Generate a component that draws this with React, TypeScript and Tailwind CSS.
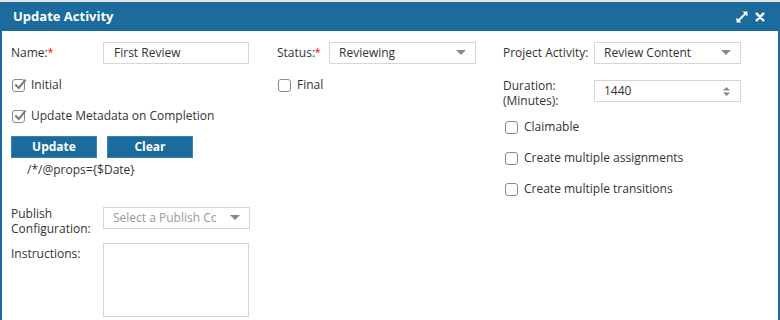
import React from "react";

const font = { fontFamily: '"Open Sans", "Noto Sans", sans-serif' };

function Check({ checked }: { checked?: boolean }) {
  return (
    <span className="relative inline-block w-[13px] h-[13px] rounded-[3px] border border-[#8a8a8a] bg-white shrink-0">
      {checked && (
        <svg viewBox="0 0 14 14" className="absolute left-[0px] top-[-2px] w-[14px] h-[14px]">
          <path d="M3 7.2 L5.8 10 L12 2.5" fill="none" stroke="#7a7a7a" strokeWidth="2" strokeLinecap="square" />
        </svg>
      )}
    </span>
  );
}

function CheckRow({ label, checked }: { label: string; checked?: boolean }) {
  return (
    <div className="flex items-center h-[20px] gap-[6px] pl-[1px]">
      <Check checked={checked} />
      <span>{label}</span>
    </div>
  );
}

function Caret() {
  return (
    <svg viewBox="0 0 10 6" className="w-[10px] h-[6px] shrink-0">
      <path d="M0 0 L10 0 L5 5 Z" fill="#888" />
    </svg>
  );
}

function Select({ value, placeholder }: { value: string; placeholder?: boolean }) {
  return (
    <div className="flex items-center h-[22px] w-[147px] border border-[#d6d6d6] bg-white pl-[9px] pr-[9px]">
      <span className={"flex-1 overflow-hidden whitespace-nowrap " + (placeholder ? "text-[#999]" : "text-[#333]")}>
        {value}
      </span>
      <span className="w-[14px]" />
      <Caret />
    </div>
  );
}

function Req() {
  return <sup className="text-[#e00] text-[10px] relative top-[-1px]">*</sup>;
}

export default function App() {
  return (
    <div className="w-[780px] h-[320px] bg-[#e6e6e6] pt-[2px]" style={font}>
      <div className="h-[318px] bg-white border-l-2 border-r-2 border-[#1c6b9d] flex flex-col">
        <div className="h-[29px] bg-[#1c6b9d] flex items-center justify-between pl-[11px] pr-[13px] shrink-0">
          <span className="text-white font-bold text-[13px]">Update Activity</span>
          <div className="flex items-center gap-[7px]">
            <svg viewBox="0 0 12 12" className="w-[12px] h-[12px]">
              <path d="M6.5 0.5 H11.5 V5.5 Z M0.5 6.5 V11.5 H5.5 Z" fill="#fff" />
              <path d="M9.5 2.5 L2.5 9.5" stroke="#fff" strokeWidth="1.8" />
            </svg>
            <svg viewBox="0 0 12 12" className="w-[10px] h-[10px]">
              <path d="M2 2 L10 10 M10 2 L2 10" stroke="#fff" strokeWidth="2.8" strokeLinecap="round" />
            </svg>
          </div>
        </div>
        <div className="flex text-[12px] text-[#333] pl-[9px]">
          {/* Column 1 */}
          <div className="w-[266px] flex flex-col">
            <div className="flex items-center mt-[11px] h-[22px]">
              <span className="w-[92px]">Name:<Req /></span>
              <div className="h-[22px] w-[146px] border border-[#d6d6d6] flex items-center pl-[10px]">First Review</div>
            </div>
            <div className="mt-[11px]">
              <CheckRow label="Initial" checked />
            </div>
            <div className="mt-[11px]">
              <CheckRow label="Update Metadata on Completion" checked />
            </div>
            <div className="flex gap-[10px] mt-[10px]">
              <button className="h-[22px] w-[86px] bg-[#1c6b9d] border border-[#3a82b0] text-white font-bold text-[12px]">Update</button>
              <button className="h-[22px] w-[86px] bg-[#1c6b9d] border border-[#3a82b0] text-white font-bold text-[12px]">Clear</button>
            </div>
            <div className="pl-[16px] mt-[3px] h-[18px] leading-[18px]">/*/@props={"{$Date}"}</div>
            <div className="flex items-start mt-[26px]">
              <span className="w-[92px] leading-[15px] pt-[1px]">Publish<br />Configuration:</span>
              <div className="mt-[2px]">
                <Select value="Select a Publish Configuration" placeholder />
              </div>
            </div>
            <div className="flex items-start mt-[7px]">
              <span className="w-[92px] pt-[2px]">Instructions:</span>
              <div className="w-[146px] h-[74px] border border-[#d6d6d6]" />
            </div>
          </div>
          {/* Column 2 */}
          <div className="w-[226px] flex flex-col">
            <div className="flex items-center mt-[11px] h-[22px]">
              <span className="w-[52px]">Status:<Req /></span>
              <Select value="Reviewing" />
            </div>
            <div className="mt-[11px]">
              <CheckRow label="Final" />
            </div>
          </div>
          {/* Column 3 */}
          <div className="flex flex-col">
            <div className="flex items-center mt-[11px] h-[22px]">
              <span className="w-[91px] whitespace-nowrap">Project Activity:</span>
              <Select value="Review Content" />
            </div>
            <div className="flex items-start mt-[11px]">
              <span className="w-[91px] leading-[15px] pt-[3px]">Duration:<br />(Minutes):</span>
              <div className="mt-[5px] h-[22px] w-[147px] border border-[#d6d6d6] flex items-center pl-[9px] pr-[9px]">
                <span className="flex-1">1440</span>
                <svg viewBox="0 0 10 12" className="w-[9px] h-[11px]">
                  <path d="M1 5 L9 5 L5 1 Z M1 7 L9 7 L5 11 Z" fill="#888" />
                </svg>
              </div>
            </div>
            <div className="mt-[9px] pl-[1px]">
              <CheckRow label="Claimable" />
            </div>
            <div className="mt-[11px] pl-[1px]">
              <CheckRow label="Create multiple assignments" />
            </div>
            <div className="mt-[11px] pl-[1px]">
              <CheckRow label="Create multiple transitions" />
            </div>
          </div>
        </div>
      </div>
    </div>
  );
}
